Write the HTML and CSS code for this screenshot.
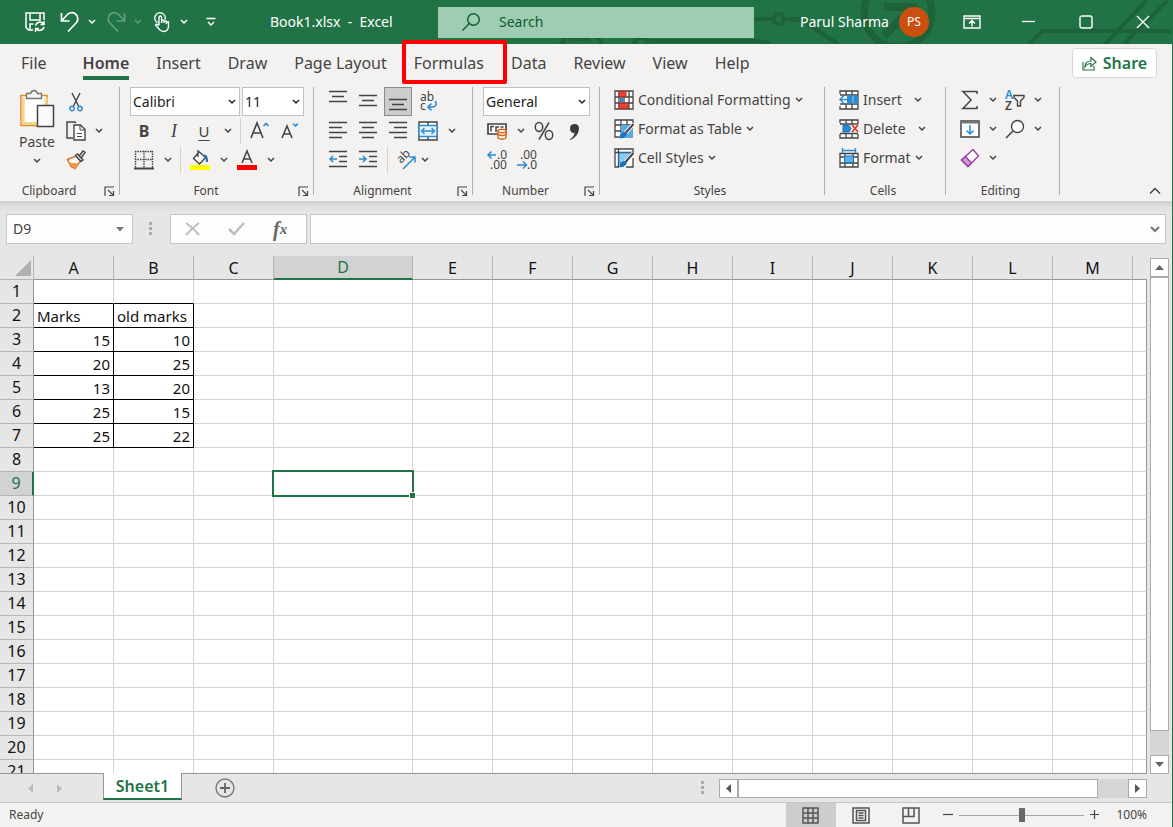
FILE: index.html
```html
<!DOCTYPE html>
<html lang="en">
<head>
<meta charset="utf-8">
<title>Book1.xlsx - Excel</title>
<link rel="stylesheet" href="styles.css">
</head>
<body>
<svg class="defs" aria-hidden="true">
  <symbol id="chev" viewBox="0 0 8 6"><path d="M1 1l3 3 3-3" fill="none" stroke="currentColor" stroke-width="1.5"/></symbol>
  <symbol id="launch" viewBox="0 0 11 11"><path d="M1 10V1h9M4 4l5 5M9.5 5v4.500H5" fill="none" stroke="currentColor" stroke-width="1.200"/></symbol>
</svg>
<div class="app">
  <header class="titlebar">
    <svg class="circuit" width="500" height="44" viewBox="0 0 500 44" aria-hidden="true">
      <g fill="none" stroke="#1d6239" stroke-width="4">
        <path d="M80 19h22M113 19h22"/><circle cx="107" cy="19" r="5"/><path d="M118 20h12l36 24"/>
        <circle cx="226" cy="13" r="34" stroke-width="7"/>
        <path d="M212 7h29v28M238 10l-26 26" stroke-width="8"/>
        <path d="M357 44l13-13h130M433 44L474 1M452 44L495 1"/>
      </g>
    </svg>
    <svg class="circuit circuit-low" width="220" height="8" viewBox="0 0 220 8" aria-hidden="true">
      <path d="M3 8q4-8 10-8M32 3h-20M36 0q6 2 8 8M76 8q1-6 7-6t7 6M92 5h105q10 0 15 3" fill="none" stroke="#1d6239" stroke-width="4"/>
    </svg>
    <div class="quick">
      <button class="tb save" aria-label="Save"><svg width="22" height="22" viewBox="0 0 22 22"><g fill="none" stroke="#fff" stroke-width="1.500"><path d="M9 19H4.500L2 16.500V2h18v7M6 2v7h10V2M6 19v-6h3.500"/><path d="M11.500 14.500a4.500 4.500 0 0 1 8-1.500M20 10v3.500h-3.500M20 16a4.500 4.500 0 0 1-8 1.500M11.500 21v-3.500H15"/></g></svg></button>
      <button class="tb" aria-label="Undo"><svg width="20" height="22" viewBox="0 0 20 22"><path d="M1.500 2v8h8M2 9.500l5-5.500a6 6 0 0 1 9.500 7.500L8 20.500" fill="none" stroke="#fff" stroke-width="1.700"/></svg></button>
      <button class="tb arrow" aria-label="Undo list"><svg width="8" height="6"><use href="#chev"/></svg></button>
      <button class="tb dim" aria-label="Redo"><svg width="20" height="22" viewBox="0 0 20 22"><path d="M18.500 2v8h-8M18 9.500L13 4a6 6 0 0 0-9.500 7.500l8.500 9" fill="none" stroke="#fff" stroke-width="1.700"/></svg></button>
      <button class="tb arrow dim" aria-label="Redo list"><svg width="8" height="6"><use href="#chev"/></svg></button>
      <button class="tb" aria-label="Touch mode"><svg width="16" height="22" viewBox="0 0 16 22"><g fill="none" stroke="#fff" stroke-width="1.400"><path d="M3.500 11.500a5.200 5.200 0 1 1 7.500-3M5 14V6.500q0-1.500 1.300-1.500t1.300 1.500V12M7.600 11V9.500h2.500V12M10.100 10.200h2.300V13M12.400 11h2.100v4.500q-.5 5-5 5-3 0-4.500-2.500L1.500 14q.8-1.800 3.500.5"/></g></svg></button>
      <button class="tb arrow" aria-label="Touch mode list"><svg width="8" height="6"><use href="#chev"/></svg></button>
      <button class="tb arrow more" aria-label="Customize toolbar"><svg width="10" height="10" viewBox="0 0 10 10"><path d="M.5 1.500h9M2 5l3 3 3-3" fill="none" stroke="#fff" stroke-width="1.400"/></svg></button>
    </div>
    <div class="doc">Book1.xlsx&nbsp; -&nbsp; Excel</div>
    <label class="search"><svg width="20" height="20" viewBox="0 0 20 20"><circle cx="12.500" cy="7.500" r="5.800" fill="none" stroke="#0e5c2f" stroke-width="1.400"/><path d="M8.300 11.500L1.500 18.500" stroke="#0e5c2f" stroke-width="1.400"/></svg><input type="text" placeholder="Search" aria-label="Search"></label>
    <div class="account">
      <span class="name">Parul Sharma</span><span class="avatar">PS</span>
      <button class="tb" aria-label="Ribbon display options"><svg width="18" height="14" viewBox="0 0 18 14"><path d="M1 1h16v12H1zM1 3.500h16M9 11.500V6M6 8.500l3-3 3 3" fill="none" stroke="#fff" stroke-width="1.400"/></svg></button>
      <button class="tb" aria-label="Minimize"><svg width="14" height="14"><path d="M0 6.500h13" stroke="#fff" stroke-width="1.300"/></svg></button>
      <button class="tb" aria-label="Maximize"><svg width="14" height="14"><rect x="1" y="1" width="12" height="12" rx="2" fill="none" stroke="#fff" stroke-width="1.400"/></svg></button>
      <button class="tb" aria-label="Close"><svg width="14" height="14"><path d="M1 1l12 12M13 1L1 13" stroke="#fff" stroke-width="1.400"/></svg></button>
    </div>
  </header>

  <nav class="tabs">
    <button class="tab file">File</button><button class="tab on">Home</button><button class="tab">Insert</button><button class="tab">Draw</button><button class="tab">Page Layout</button><button class="tab marked">Formulas</button><button class="tab">Data</button><button class="tab">Review</button><button class="tab">View</button><button class="tab">Help</button>
    <button class="share"><svg width="15" height="15" viewBox="0 0 15 15"><path d="M1 6v8h11v-4M3 11q0-6 6-6V1.500L14 6l-5 4.500V7.500q-4 0-6 3.500z" fill="none" stroke="#217346" stroke-width="1.200"/></svg>Share</button>
  </nav>

  <section class="ribbon">
    <div class="group g-clip">
      <div class="clip">
        <button class="paste"><svg width="36" height="40" viewBox="0 0 36 40"><path d="M2 6.500h26v30H2z" fill="#fff" stroke="#e08a2e" stroke-width="1.500"/><path d="M4.200 8.500v26H27V8.500" fill="none" stroke="#f7d58f" stroke-width="3"/><path d="M7.500 9.500V4.500h4q1-3 3.500-3t3.500 3h4v5z" fill="#f4f4f4" stroke="#777" stroke-width="1.400"/><path d="M18.500 16.500h16v21h-16z" fill="#fafafa" stroke="#444" stroke-width="1.500"/></svg><span>Paste</span><svg width="8" height="6"><use href="#chev"/></svg></button>
        <div class="clip-side">
          <div class="row"><button class="ib" aria-label="Cut"><svg width="14" height="20" viewBox="0 0 14 20"><path d="M3 1l6.500 13M11 1L4.500 14" stroke="#444" stroke-width="1.400"/><circle cx="3" cy="16.500" r="2.200" fill="none" stroke="#2b8ad0" stroke-width="1.400"/><circle cx="11" cy="16.500" r="2.200" fill="none" stroke="#2b8ad0" stroke-width="1.400"/></svg></button></div>
          <div class="row"><button class="ib" aria-label="Copy"><svg width="20" height="20" viewBox="0 0 20 20"><path d="M7 17H1V1h8l1 1" fill="none" stroke="#444" stroke-width="1.400"/><path d="M8 4h6.500L19 8.500V19H8z" fill="#fff" stroke="#444" stroke-width="1.400"/><path d="M14 4v5h5M11 12.500h5M11 15.500h5" fill="none" stroke="#444"/></svg></button><button class="ar" aria-label="Copy options"><svg width="8" height="6"><use href="#chev"/></svg></button></div>
          <div class="row"><button class="ib" aria-label="Format Painter"><svg width="20" height="20" viewBox="0 0 20 20"><path d="M1.500 9.500L10 6l4.500 5L9 18.500l-4-2z" fill="#fff" stroke="#e0701f" stroke-width="1.400"/><path d="M3 12.500l10 1L9 18l-4-2.500z" fill="#f29a4a"/><path d="M9.500 5.500l2-1.500 5.500 6-2 1.500zM13.500 5.500L17 1l2 1.500-3.500 5" fill="#eee" stroke="#444" stroke-width="1.400"/></svg></button></div>
        </div>
      </div>
      <footer><span>Clipboard</span><button class="launch" aria-label="Clipboard settings"><svg width="11" height="11"><use href="#launch"/></svg></button></footer>
    </div>

    <div class="group g-font">
      <div class="row pick"><label class="combo w-font"><select aria-label="Font"><option>Calibri</option></select><svg width="8" height="6"><use href="#chev"/></svg></label><label class="combo w-size"><select aria-label="Font size"><option>11</option></select><svg width="8" height="6"><use href="#chev"/></svg></label></div>
      <div class="row"><button class="ib"><b>B</b></button><button class="ib it">I</button><button class="ib un">U</button><button class="ar" aria-label="Underline options"><svg width="8" height="6"><use href="#chev"/></svg></button><i class="sep"></i>
        <button class="ib" aria-label="Grow font"><svg width="20" height="20" viewBox="0 0 20 20"><path d="M1 17L7 2l6 15M3.200 12h7.600" fill="none" stroke="#444" stroke-width="1.600"/><path d="M13.500 5L16 2.500 18.500 5" fill="none" stroke="#2b8ad0" stroke-width="1.600"/></svg></button><button class="ib" aria-label="Shrink font"><svg width="18" height="20" viewBox="0 0 18 20"><path d="M1 17L6 5l5 12M3 13h6" fill="none" stroke="#444" stroke-width="1.600"/><path d="M12 2.500L14.500 5 17 2.500" fill="none" stroke="#2b8ad0" stroke-width="1.600"/></svg></button></div>
      <div class="row"><button class="ib" aria-label="Borders"><svg width="20" height="20" viewBox="0 0 20 20"><path d="M1 1.500h18M1 9.500h18M1.500 1v17M10 1v17M18.500 1v17" stroke="#444" stroke-width="1.400" stroke-dasharray="1.500 1"/><path d="M0 18.500h20" stroke="#444" stroke-width="2"/></svg></button><button class="ar" aria-label="Border options"><svg width="8" height="6"><use href="#chev"/></svg></button><i class="sep"></i>
        <button class="ib" aria-label="Fill color"><svg width="20" height="20" viewBox="0 0 20 20"><path d="M9 2L3.500 8.500l6 5.500 6-6.500L9.500 2 8 1v6" fill="#fff" stroke="#444" stroke-width="1.400"/><path d="M14 4.500q4-1 4 7.500h-2q0-4-2-7.500" fill="#1f6fb5"/><path d="M0 15h20v5H0z" fill="#ff0"/></svg></button><button class="ar" aria-label="Fill options"><svg width="8" height="6"><use href="#chev"/></svg></button><button class="ib tcolor" aria-label="Font color"><svg width="20" height="20" viewBox="0 0 20 20"><path d="M5 13l5-12 5 12M6.800 9h6.400" fill="none" stroke="#444" stroke-width="1.500"/><path d="M0 15h20v5H0z" fill="red"/></svg></button><button class="ar" aria-label="Font color options"><svg width="8" height="6"><use href="#chev"/></svg></button></div>
      <footer><span>Font</span><button class="launch" aria-label="Font settings"><svg width="11" height="11"><use href="#launch"/></svg></button></footer>
    </div>

    <div class="group g-align">
      <div class="row"><button class="ib" aria-label="Top align"><svg width="18" height="21"><path d="M0 .5h18M3 5.500h12M0 10.500h18" stroke="#444" stroke-width="1.300"/></svg></button><button class="ib" aria-label="Middle align"><svg width="18" height="21"><path d="M0 4.500h18M3 9.500h12M0 14.500h18" stroke="#444" stroke-width="1.300"/></svg></button><button class="ib pressed" aria-label="Bottom align"><svg width="18" height="21"><path d="M0 8.500h18M3 13.500h12M0 18.500h18" stroke="#444" stroke-width="1.300"/></svg></button><button class="ib" aria-label="Wrap text"><svg width="20" height="23" viewBox="0 0 20 23"><text x="2" y="11" class="g12">ab</text><text x="2" y="20" class="g12">c</text><path d="M17.500 11q2 6-3 6h-4M13.500 13.500L10 17l3.500 3.500" fill="none" stroke="#2b8ad0" stroke-width="1.600"/></svg></button></div>
      <div class="row"><button class="ib" aria-label="Align left"><svg width="18" height="17"><path d="M0 .5h18M0 5.500h13M0 10.500h18M0 15.500h13" stroke="#444" stroke-width="1.300"/></svg></button><button class="ib" aria-label="Center"><svg width="18" height="17"><path d="M0 .5h18M3 5.500h12M0 10.500h18M3 15.500h12" stroke="#444" stroke-width="1.300"/></svg></button><button class="ib" aria-label="Align right"><svg width="18" height="17"><path d="M0 .5h18M5 5.500h13M0 10.500h18M5 15.500h13" stroke="#444" stroke-width="1.300"/></svg></button><button class="ib" aria-label="Merge and center"><svg width="20" height="20" viewBox="0 0 20 20"><path d="M1 1h18v18H1zM10 1v18" fill="#fff" stroke="#444" stroke-width="1.400"/><path d="M1 4.500h18v11H1z" fill="#e8f3fb" stroke="#2b8ad0" stroke-width="1.500"/><path d="M4 10h12M6.500 7L3.500 10l3 3M13.500 7l3 3-3 3" fill="none" stroke="#2b8ad0" stroke-width="1.400"/></svg></button><button class="ar" aria-label="Merge options"><svg width="8" height="6"><use href="#chev"/></svg></button></div>
      <div class="row"><button class="ib" aria-label="Decrease indent"><svg width="18" height="17"><path d="M0 .5h18M10 5.500h8M10 10.500h8M0 15.500h18" stroke="#444" stroke-width="1.300"/><path d="M8 8H1M4 5L1 8l3 3" fill="none" stroke="#2b8ad0" stroke-width="1.500"/></svg></button><button class="ib" aria-label="Increase indent"><svg width="18" height="17"><path d="M0 .5h18M10 5.500h8M10 10.500h8M0 15.500h18" stroke="#444" stroke-width="1.300"/><path d="M0 8h7M4 5l3 3-3 3" fill="none" stroke="#2b8ad0" stroke-width="1.500"/></svg></button><i class="sep thin"></i><button class="ib narrow" aria-label="Orientation"><svg width="22" height="22" viewBox="0 0 22 22"><text x="0" y="0" transform="translate(6 15) rotate(-45)" class="g12">ab</text><path d="M8 20L20 8M14.500 8H20v5.500" fill="none" stroke="#2b8ad0" stroke-width="1.500"/></svg></button><button class="ar tight" aria-label="Orientation options"><svg width="8" height="6"><use href="#chev"/></svg></button></div>
      <footer><span>Alignment</span><button class="launch" aria-label="Alignment settings"><svg width="11" height="11"><use href="#launch"/></svg></button></footer>
    </div>

    <div class="group g-num">
      <div class="row pick"><label class="combo w-num"><select aria-label="Number format"><option>General</option></select><svg width="8" height="6"><use href="#chev"/></svg></label></div>
      <div class="row"><button class="ib" aria-label="Accounting format"><svg width="20" height="18" viewBox="0 0 20 18"><path d="M1 2h18v10H1z" fill="#fff" stroke="#444" stroke-width="1.700"/><path d="M7 4.500H4v5M12 5H9v5M13.500 5h3" fill="none" stroke="#444" stroke-width="1.500"/><path d="M11 9v7q4 2.500 8 0V9z" fill="#fff" stroke="#e0631a" stroke-width="1.400"/><ellipse cx="15" cy="9" rx="4" ry="1.700" fill="#fff" stroke="#e0631a" stroke-width="1.400"/><path d="M11 12.500q4 2 8 0" fill="none" stroke="#e0631a" stroke-width="1.400"/></svg></button><button class="ar" aria-label="Accounting options"><svg width="8" height="6"><use href="#chev"/></svg></button><button class="ib pct" aria-label="Percent style"><svg width="20" height="20" viewBox="0 0 20 20"><g fill="none" stroke="#444" stroke-width="1.500"><ellipse cx="5" cy="6" rx="3.700" ry="4.500"/><ellipse cx="15" cy="14" rx="3.700" ry="4.500"/><path d="M15 1.500L5 18.500"/></g></svg></button><button class="ib" aria-label="Comma style"><svg width="12" height="18" viewBox="0 0 12 18"><path d="M2 17q4-2 4.500-6a4.500 4.500 0 1 1 4.500-5q0 8-8.500 12z" fill="#3a3a3a"/></svg></button></div>
      <div class="row"><button class="ib" aria-label="Increase decimal"><svg width="22" height="23" viewBox="0 0 22 23"><text x="11" y="11" class="g12">.0</text><text x="4" y="21" class="g12">.00</text><path d="M10 7H2M5.500 3.500L2 7l3.500 3.500" fill="none" stroke="#2b8ad0" stroke-width="1.500"/></svg></button><button class="ib" aria-label="Decrease decimal"><svg width="22" height="23" viewBox="0 0 22 23"><text x="4" y="11" class="g12">.00</text><text x="11" y="21" class="g12">.0</text><path d="M1 17h9M7 13.500l3.500 3.500L7 20.500" fill="none" stroke="#2b8ad0" stroke-width="1.500"/></svg></button></div>
      <footer><span>Number</span><button class="launch" aria-label="Number settings"><svg width="11" height="11"><use href="#launch"/></svg></button></footer>
    </div>

    <div class="group g-styles">
      <div class="list">
        <button class="li"><svg width="20" height="20" viewBox="0 0 20 20"><path d="M1 1h18v18H1zM1 7h18M1 13h18M5 1v18M10 1v18M15 1v18" fill="#fff" stroke="#444" stroke-width="1.300"/><path d="M5 1.500h7v5H5zM5 13.500h9v5H5z" fill="#ea4637" stroke="#d2261b"/><path d="M6 8h3v4H6z" fill="#2b8ad0"/></svg><span>Conditional Formatting</span><svg width="8" height="6"><use href="#chev"/></svg></button>
        <button class="li"><svg width="20" height="20" viewBox="0 0 20 20"><path d="M1 1h18v18H1z" fill="#fff"/><path d="M19 4V1H1v17h4M1 6h18M1 12h6M7 1v13M13 1v6" fill="none" stroke="#444" stroke-width="1.300"/><path d="M7 6h12v13H7z" fill="#58abe2"/><path d="M19.500 5l-8 9" stroke="#fff" stroke-width="4"/><path d="M19.500 5l-8 9" stroke="#444" stroke-width="2"/><path d="M5 19q1-6 6-6l2 2q-2 5-8 4z" fill="#1873bf"/></svg><span>Format as Table</span><svg width="8" height="6"><use href="#chev"/></svg></button>
        <button class="li"><svg width="20" height="20" viewBox="0 0 20 20"><path d="M1 1h18v18H1z" fill="#fff"/><path d="M19 5V1H1v18h4M1 4.500h18M4.500 1v18M19 10v9h-7" fill="none" stroke="#444" stroke-width="1.300"/><path d="M5 5h12L9 15H5z" fill="#8cc8ef" stroke="#2b8ad0"/><path d="M19.500 5l-8 9" stroke="#fff" stroke-width="4"/><path d="M19.500 5l-8 9" stroke="#444" stroke-width="2"/><path d="M5 19q1-6 6-6l2 2q-2 5-8 4z" fill="#1873bf"/></svg><span>Cell Styles</span><svg width="8" height="6"><use href="#chev"/></svg></button>
      </div>
      <footer><span>Styles</span></footer>
    </div>

    <div class="group g-cells">
      <div class="list">
        <button class="li wide"><svg width="20" height="20" viewBox="0 0 20 20"><path d="M1 4V1h18v18H1v-3M1 5h18M1 14h18M7 1v4M13 1v4M7 14v5M13 14v5" fill="#fff" stroke="#444" stroke-width="1.300"/><path d="M8 5.500h11v8H8z" fill="#2b8ad0"/><path d="M14 6v7" stroke="#8cc8ef"/><path d="M11 9.500H1.500M5 5.500l-4 4 4 4" fill="none" stroke="#2b8ad0" stroke-width="1.500"/></svg><span>Insert</span><svg width="8" height="6"><use href="#chev"/></svg></button>
        <button class="li wide"><svg width="20" height="20" viewBox="0 0 20 20"><path d="M1 4V1h18v4M1 5h18M7 1v4M13 1v4M1 15v4h18v-4M1 14.500h18M7 14v5M13 14v5" fill="#fff" stroke="#444" stroke-width="1.300"/><path d="M4 6.500h6l2 3-2 3.500H4z" fill="#2b8ad0" stroke="#1873bf"/><path d="M13 6l6 7M19 6l-6 7" stroke="#e03a2d" stroke-width="1.700"/></svg><span>Delete</span><svg width="8" height="6"><use href="#chev"/></svg></button>
        <button class="li"><svg width="20" height="20" viewBox="0 0 20 20"><path d="M1 5.500h18V19H1zM1 9h18M1 15h18M6 5v14M14 5v14" fill="#fff" stroke="#444" stroke-width="1.300"/><path d="M5.500 8h9v6.500h-9z" fill="#5cb0e8" stroke="#1873bf"/><path d="M3.500 0v5M16.500 0v5M4 2.500h12" stroke="#2b8ad0" stroke-width="1.400"/></svg><span>Format</span><svg width="8" height="6"><use href="#chev"/></svg></button>
      </div>
      <footer><span>Cells</span></footer>
    </div>

    <div class="group g-edit">
      <div class="list">
        <div class="li"><button class="ib" aria-label="AutoSum"><svg width="18" height="20" viewBox="0 0 18 20"><path d="M16 4V1.500H2L10 10l-8 8.500h14V16" fill="none" stroke="#444" stroke-width="1.500"/></svg></button><button class="ar" aria-label="AutoSum options"><svg width="8" height="6"><use href="#chev"/></svg></button><button class="ib" aria-label="Sort and filter"><svg width="22" height="22" viewBox="0 0 22 22"><text x="1" y="10" class="g12 blue">A</text><text x="1" y="21" class="g12 heavy">Z</text><path d="M10 6.500h10v2L16.500 12v5h-3v-5L10 8.500z" fill="none" stroke="#444" stroke-width="1.400"/></svg></button><button class="ar tight" aria-label="Sort options"><svg width="8" height="6"><use href="#chev"/></svg></button></div>
        <div class="li"><button class="ib" aria-label="Fill"><svg width="20" height="18" viewBox="0 0 20 18"><path d="M1 1h18v16H1z" fill="#fff" stroke="#444" stroke-width="1.500"/><path d="M1 2.500h18" stroke="#777" stroke-width="2"/><path d="M10 5v9M6.500 10.500L10 14l3.500-3.500" fill="none" stroke="#2b8ad0" stroke-width="1.500"/></svg></button><button class="ar" aria-label="Fill options"><svg width="8" height="6"><use href="#chev"/></svg></button><button class="ib" aria-label="Find and select"><svg width="20" height="20" viewBox="0 0 20 20"><circle cx="12.500" cy="7.500" r="6" fill="#fff" stroke="#444" stroke-width="1.400"/><path d="M8 12l-7 7" stroke="#444" stroke-width="1.600"/></svg></button><button class="ar tight" aria-label="Find options"><svg width="8" height="6"><use href="#chev"/></svg></button></div>
        <div class="li"><button class="ib" aria-label="Clear"><svg width="20" height="20" viewBox="0 0 20 20"><path d="M13 1.500L18.500 8 8 18.500 1.500 12z" fill="#fff" stroke="#9a3fa5" stroke-width="1.400"/><path d="M5.500 8.500l6 6.500L8 18.500 1.500 12z" fill="#cf9ad6" stroke="#9a3fa5" stroke-width="1.400"/></svg></button><button class="ar" aria-label="Clear options"><svg width="8" height="6"><use href="#chev"/></svg></button></div>
      </div>
      <footer><span>Editing</span></footer>
    </div>
    <button class="collapse" aria-label="Collapse ribbon"><svg width="12" height="8" viewBox="0 0 12 8"><path d="M1 6.500l5-5 5 5" fill="none" stroke="#444" stroke-width="1.500"/></svg></button>
  </section>

  <section class="formula">
    <label class="namebox"><input type="text" value="D9" aria-label="Name box"><svg width="8" height="5"><path d="M0 0h8L4 4.500z" fill="#777"/></svg></label>
    <svg class="grip" width="4" height="14"><path d="M0 0h3v3H0zM0 5h3v3H0zM0 10h3v3H0z" fill="#aaa"/></svg>
    <div class="fx">
      <button aria-label="Cancel"><svg width="16" height="14" viewBox="0 0 16 14"><path d="M1 1q6 4 13 12M14 1Q7 6 1 13" fill="none" stroke="#bdbdbd" stroke-width="2"/></svg></button>
      <button aria-label="Enter"><svg width="17" height="14" viewBox="0 0 17 14"><path d="M1 7l5 5L16 1" fill="none" stroke="#bdbdbd" stroke-width="2.500"/></svg></button>
      <button class="fn" aria-label="Insert function">f<small>x</small></button>
    </div>
    <label class="bar"><input type="text" aria-label="Formula bar"><svg width="10" height="7" viewBox="0 0 10 7"><path d="M1 1l4 4 4-4" fill="none" stroke="#777" stroke-width="2.200"/></svg></label>
  </section>

  <main class="work">
    <div class="sheet">
      <table>
        <colgroup><col class="c-row"><col class="c"><col class="c"><col class="c"><col class="c-wide"><col class="c"><col class="c"><col class="c"><col class="c"><col class="c"><col class="c"><col class="c"><col class="c"><col class="c"><col></colgroup>
        <thead><tr><th class="corner"><svg width="16" height="16"><path d="M16 0v16H0z" fill="#b0b0b0"/></svg></th><th>A</th><th>B</th><th>C</th><th class="sel">D</th><th>E</th><th>F</th><th>G</th><th>H</th><th>I</th><th>J</th><th>K</th><th>L</th><th>M</th><th></th></tr></thead>
        <tbody>
        <tr class="above"><th>1<td><td><td><td><td><td><td><td><td><td><td><td><td><td>
        <tr class="data"><th>2<td class="txt">Marks<td class="txt">old marks<td><td><td><td><td><td><td><td><td><td><td><td>
        <tr class="data"><th>3<td>15<td>10<td><td><td><td><td><td><td><td><td><td><td><td>
        <tr class="data"><th>4<td>20<td>25<td><td><td><td><td><td><td><td><td><td><td><td>
        <tr class="data"><th>5<td>13<td>20<td><td><td><td><td><td><td><td><td><td><td><td>
        <tr class="data"><th>6<td>25<td>15<td><td><td><td><td><td><td><td><td><td><td><td>
        <tr class="data"><th>7<td>25<td>22<td><td><td><td><td><td><td><td><td><td><td><td>
        <tr><th>8<td><td><td><td><td><td><td><td><td><td><td><td><td><td>
        <tr><th class="sel">9<td><td><td><td class="cur"><span class="cursor"></span><td><td><td><td><td><td><td><td><td><td>
        <tr><th>10<td><td><td><td><td><td><td><td><td><td><td><td><td><td>
        <tr><th>11<td><td><td><td><td><td><td><td><td><td><td><td><td><td>
        <tr><th>12<td><td><td><td><td><td><td><td><td><td><td><td><td><td>
        <tr><th>13<td><td><td><td><td><td><td><td><td><td><td><td><td><td>
        <tr><th>14<td><td><td><td><td><td><td><td><td><td><td><td><td><td>
        <tr><th>15<td><td><td><td><td><td><td><td><td><td><td><td><td><td>
        <tr><th>16<td><td><td><td><td><td><td><td><td><td><td><td><td><td>
        <tr><th>17<td><td><td><td><td><td><td><td><td><td><td><td><td><td>
        <tr><th>18<td><td><td><td><td><td><td><td><td><td><td><td><td><td>
        <tr><th>19<td><td><td><td><td><td><td><td><td><td><td><td><td><td>
        <tr><th>20<td><td><td><td><td><td><td><td><td><td><td><td><td><td>
        <tr><th>21<td><td><td><td><td><td><td><td><td><td><td><td><td><td>
        </tbody>
      </table>
    </div>
    <div class="vscroll">
      <button aria-label="Scroll up"><svg width="9" height="5"><path d="M0 5h9L4.500 0z" fill="#666"/></svg></button>
      <div class="thumb"></div><div class="track"></div>
      <button aria-label="Scroll down"><svg width="9" height="5"><path d="M0 0h9L4.500 5z" fill="#666"/></svg></button>
    </div>
  </main>

  <footer class="sheets">
    <div class="nav"><button aria-label="Previous sheet"><svg width="5" height="9"><path d="M5 0v9L0 4.500z" fill="#bbb"/></svg></button><button aria-label="Next sheet"><svg width="5" height="9"><path d="M0 0v9l5-4.500z" fill="#bbb"/></svg></button></div>
    <button class="sheet-tab">Sheet1</button>
    <button class="add" aria-label="New sheet"><svg width="20" height="20"><circle cx="10" cy="10" r="9" fill="none" stroke="#777" stroke-width="1.400"/><path d="M5 10h10M10 5v10" stroke="#666" stroke-width="1.800"/></svg></button>
    <svg class="grip" width="4" height="14"><path d="M0 0h3v3H0zM0 5h3v3H0zM0 10h3v3H0z" fill="#aaa"/></svg>
    <div class="hscroll">
      <button aria-label="Scroll left"><svg width="5" height="9"><path d="M5 0v9L0 4.500z" fill="#555"/></svg></button>
      <div class="thumb"></div><div class="track"></div>
      <button aria-label="Scroll right"><svg width="5" height="9"><path d="M0 0v9l5-4.500z" fill="#555"/></svg></button>
    </div>
  </footer>

  <footer class="status">
    <span class="ready">Ready</span>
    <button class="view on" aria-label="Normal view"><svg width="18" height="17"><path d="M1 1h15v15H1zM1 6h15M1 11h15M6 1v15M11 1v15" fill="none" stroke="#555" stroke-width="1.500"/></svg></button>
    <button class="view" aria-label="Page layout view"><svg width="18" height="17"><path d="M1 1h16v15H1zM4.500 3.500h9v10h-9zM6.500 6h5M6.500 8.500h5M6.500 11h5" fill="none" stroke="#555" stroke-width="1.500"/></svg></button>
    <button class="view" aria-label="Page break view"><svg width="18" height="17"><path d="M1 1h16v15H1zM1 9.500h11V1M6.500 1v8" fill="none" stroke="#555" stroke-width="1.500"/></svg></button>
    <div class="zoom">
      <button aria-label="Zoom out"><svg width="10" height="10"><path d="M0 4.500h10" stroke="#444" stroke-width="1.200"/></svg></button>
      <input type="range" min="0" max="100" value="50" aria-label="Zoom">
      <button aria-label="Zoom in"><svg width="10" height="10"><path d="M0 4.500h9M4.500 0v9" stroke="#444" stroke-width="1.200"/></svg></button>
      <span>100%</span>
    </div>
  </footer>
</div>
</body>
</html>
```

FILE: styles.css
```css
*, *::before, *::after { box-sizing: border-box; }
html, body { height: 100%; margin: 0; }
body { font: 14px/20px "Noto Sans", "Open Sans", sans-serif; color: #444; background: #e6e6e6; }
button, input, select { font: inherit; color: inherit; margin: 0; padding: 0; border: 0; background: none; border-radius: 0; outline: 0; }
button { display: flex; align-items: center; justify-content: center; }
svg { display: block; flex: none; overflow: visible; }
.defs { position: absolute; width: 0; height: 0; }

.app { height: 100vh; display: flex; flex-direction: column; border-right: 1px solid #217346; overflow: hidden; }

/* title bar */
.titlebar { position: relative; flex: none; height: 44px; display: grid; grid-template-columns: 270px 168px 1fr 418px; align-items: center; background: #217346; color: #fff; }
.titlebar > * { position: relative; }
.titlebar > .circuit { position: absolute; right: 0; top: 0; overflow: hidden; }
.titlebar > .circuit-low { right: 394px; top: 36px; height: 8px; }
.quick { display: flex; align-items: center; padding-left: 20px; }
.tb { flex: none; width: 30px; height: 30px; }
.quick .tb { width: 28px; }
.quick .tb.save { width: 30px; margin-right: 6px; }
.quick .arrow { width: 16px; margin-right: 2px; }
.quick .more { margin-left: 9px; }
.dim { opacity: .3; }
.search { display: flex; align-items: center; gap: 18px; height: 31px; padding-left: 23px; background: #9fcdb3; color: #0e5c2f; }
.search input { flex: 1; min-width: 0; }
.search input::placeholder { color: #0e5c2f; opacity: 1; }
.account { display: flex; align-items: center; padding-left: 46px; }
.name { flex: none; width: 99px; white-space: nowrap; }
.avatar { flex: none; width: 30px; height: 30px; border-radius: 50%; background: #ca5010; font-size: 12px; line-height: 30px; text-align: center; margin-right: 28px; }
.account .tb + .tb { margin-left: 27px; }

/* tabs */
.tabs { flex: none; display: flex; align-items: center; gap: 27px; height: 40px; padding: 0 15px 2px 21px; background: #f3f2f1; font-size: 16px; }
.tab { position: relative; height: 38px; white-space: nowrap; }
.tab.file { margin-right: 9px; }
.tab.on { font-weight: 600; }
.tab.on::after { content: ""; position: absolute; left: 0; right: 0; bottom: 2px; height: 4px; background: #217346; }
.tab.marked::after { content: ""; position: absolute; z-index: 2; left: -12px; right: -23px; top: -4px; height: 44px; border: 4px solid #f00; border-radius: 2px; }
.share { gap: 6px; width: 85px; height: 30px; margin-left: auto; background: #fff; border: 1px solid #d8d8d8; border-radius: 4px; color: #217346; font-weight: 600; }

/* ribbon */
.ribbon { flex: none; display: flex; height: 120px; padding: 3px 0 6px; background: #f3f2f1; border-bottom: 3px solid #d2d2d2; }
.group { display: flex; flex-direction: column; border-right: 1px solid #b1b1b1; padding-left: 9px; }
.group footer { display: flex; align-items: center; gap: 6px; margin: auto 0 0 -9px; height: 8px; padding-right: 4px; font-size: 12px; }
.group footer span { flex: 1; text-align: center; }
.g-clip { width: 120px; }
.g-font { width: 194px; }
.g-align { width: 159px; }
.g-num { width: 127px; }
.g-styles { width: 225px; }
.g-cells { width: 121px; }
.g-edit { width: 114px; }
.row { display: flex; align-items: center; height: 29px; }
.pick { gap: 2px; padding-left: 1px; }
.ib { width: 30px; height: 29px; }
.ib b { font-size: 16px; }
.it { font: italic 18px/20px "Liberation Serif", serif; }
.un { text-decoration: underline; text-underline-offset: 3px; font-size: 15px; }
.ar { width: 17px; height: 29px; }
.ar.tight { width: 9px; }
.narrow { width: 28px; }
.sep { width: 1px; height: 26px; margin: 0 4px; background: #d0d0d0; }
.pressed { width: 28px; margin: 0 1px; background: #cfcdcb; border: 1px solid #8a8a8a; }
.combo { display: grid; align-items: center; height: 29px; background: #fff; border: 1px solid #c0c0c0; color: #222; }
.combo > * { grid-area: 1 / 1; }
.combo select { appearance: none; width: 100%; height: 27px; padding-left: 2px; }
.combo svg { justify-self: end; margin-right: 3px; pointer-events: none; }
.w-font { width: 110px; }
.w-size { width: 62px; }
.w-num { width: 107px; }
.clip { display: flex; }
.paste { flex-direction: column; justify-content: flex-start; gap: 2px; width: 54px; padding-top: 2px; margin-left: 1px; }
.paste span { line-height: 22px; margin-bottom: 3px; }
.clip-side .row { width: 46px; margin-left: -3px; }
.launch { width: 11px; height: 11px; }
.list { display: flex; flex-direction: column; padding-left: 5px; margin-top: -2px; }
.li { display: flex; justify-content: flex-start; align-items: center; gap: 4px; height: 29px; white-space: nowrap; }
.wide span { margin-right: 8px; }
.g-edit .list { padding-left: 0; }
.g-edit .li { gap: 0; }
.g-edit .ar { width: 15px; }
.collapse { margin: auto 11px 0 auto; }
.g12 { font-size: 12px; fill: #444; }
.blue { fill: #2b8ad0; font-weight: 600; }
.heavy { font-weight: 600; }

/* formula bar */
.formula { flex: none; display: flex; align-items: center; height: 52px; padding: 0 6px 2px; background: linear-gradient(#dadada, #e6e6e6 8px); }
.namebox, .fx, .bar { display: flex; align-items: center; height: 30px; background: #fdfdfd; border: 1px solid #c6c6c6; }
.namebox { width: 127px; padding: 0 8px 0 6px; }
.namebox input, .bar input { flex: 1; min-width: 0; }
.formula .grip { margin: 0 17px 0 16px; }
.fx { width: 137px; padding-right: 4px; }
.fx button { flex: 1; }
.fx .fn { font: italic 700 20px/26px "Liberation Serif", serif; color: #666; }
.fn small { font-size: 15px; align-self: flex-end; }
.bar { flex: 1; margin-left: 3px; padding-right: 5px; }

/* grid */
.work { flex: 1 1 0; min-height: 0; display: flex; gap: 3px; padding-right: 3px; }
.sheet { flex: 1; min-width: 0; overflow: hidden; border-bottom: 1px solid #969696; }
table { width: 100%; table-layout: fixed; border-collapse: separate; border-spacing: 0; color: #111; font-size: 15px; line-height: 20px; }
.c-row { width: 34px; }
.c { width: 80px; }
.c-wide { width: 139px; }
th { font-size: 16px; font-weight: 400; background: #e6e6e6; height: 24px; padding: 0 0 2px; border: 0 solid #969696; }
thead th { padding: 0; border-right: 1px solid #b5b5b5; border-bottom-width: 1px; }
thead th:last-child { border-right: 0; }
.corner { border-color: #b5b5b5; }
.corner svg { margin: 0 2px 0 auto; }
tbody th { border-right-width: 1px; border-bottom: 1px solid #b5b5b5; }
td { height: 24px; padding: 0 3px; text-align: right; background: #fff; border: solid #d4d4d4; border-width: 0 1px 1px 0; }
td:last-child { border-right-color: #969696; }
td.txt { text-align: left; white-space: nowrap; }
.data td:nth-child(2), .data td:nth-child(3) { border-color: #000; }
.above td:nth-child(2), .above td:nth-child(3) { border-bottom-color: #000; }
th.sel { background: #d2d2d2; color: #217346; }
thead th.sel { border-bottom: 2px solid #217346; }
tbody th.sel { border-right: 2px solid #217346; }
.cur { position: relative; }
.cursor { position: absolute; z-index: 1; inset: -2px; border: 2px solid #217346; }
.cursor::after { content: ""; position: absolute; right: -4px; bottom: -4px; width: 7px; height: 7px; background: #217346; border: 1px solid #fff; }

/* scroll bars */
.vscroll { width: 19px; display: flex; flex-direction: column; margin-top: 2px; }
.vscroll button, .hscroll button { flex: none; width: 19px; height: 19px; background: #fff; border: 1px solid #ababab; }
.vscroll .thumb { flex: 1; background: #fff; border: 1px solid #ababab; }
.vscroll .track { height: 24px; background: #d6d6d6; }
.sheets { flex: none; display: flex; height: 29px; padding-right: 25px; border-bottom: 1px solid #c6c6c6; align-items: center; }
.nav { display: flex; gap: 24px; width: 103px; padding-left: 28px; }
.sheet-tab { align-self: flex-start; width: 79px; height: 27px; margin-top: -1px; position: relative; background: #fff; border: solid #969696; border-width: 0 1px; border-bottom: 2px solid #217346; color: #217346; font-weight: 600; font-size: 16px; }
.add { margin-left: 33px; }
.sheets .grip { margin-left: auto; margin-right: 14px; }
.hscroll { display: flex; width: 428px; }
.hscroll .thumb { flex: 1; background: #fff; border: 1px solid #ababab; }
.hscroll .track { width: 30px; background: #d6d6d6; }

/* status bar */
.status { flex: none; display: flex; align-items: center; height: 24px; background: #f3f2f1; font-size: 12px; }
.ready { margin-right: auto; padding-left: 9px; }
.view { width: 50px; height: 24px; }
.view.on { background: #cfcdcb; }
.zoom { display: flex; align-items: center; gap: 6px; padding: 0 25px 0 7px; }
.zoom input { appearance: none; width: 125px; height: 14px; background: linear-gradient(#a6a6a6, #a6a6a6) center / 100% 1px no-repeat; }
.zoom input::-webkit-slider-thumb { appearance: none; width: 6px; height: 14px; background: #6a6a6a; }
.zoom span { margin-left: 10px; }
```
